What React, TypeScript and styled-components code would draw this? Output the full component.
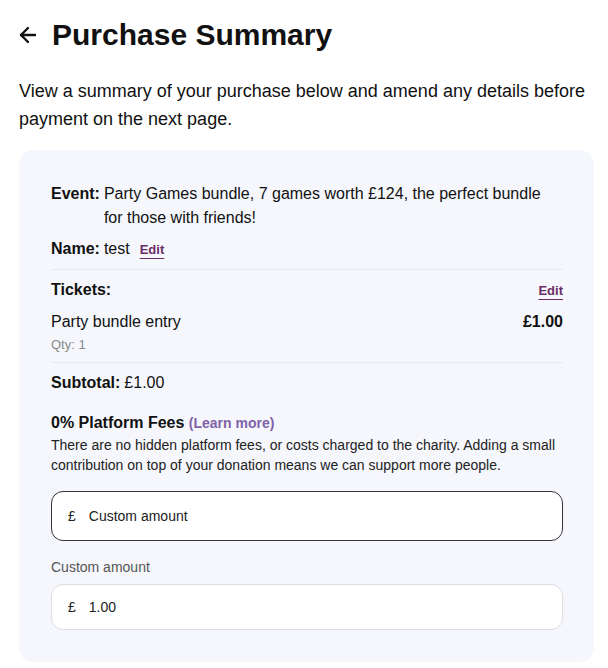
import styled, { createGlobalStyle } from "styled-components";
import { ArrowLeft } from "lucide-react";

const GlobalStyle = createGlobalStyle`
    body {
        margin: 0;
        background: #fff;
        font-family: "Liberation Sans", Arial, sans-serif;
        color: #111;
    }
`

export default function App() {
    return (
        <PageWrap>
            <GlobalStyle />
            <HeaderWrap>
                <BackButton aria-label="Back">
                    <ArrowLeft size={24} strokeWidth={2.4} />
                </BackButton>
                <h1>Purchase Summary</h1>
            </HeaderWrap>

            <Intro>
                View a summary of your purchase below and amend any details before payment on the next page.
            </Intro>

            <Card>
                <DetailRow $gapBelow={7}>
                    <b>Event:</b>
                    <span>Party Games bundle, 7 games worth £124, the perfect bundle for those with friends!</span>
                </DetailRow>
                <DetailRow $gapBelow={6}>
                    <b>Name:</b>
                    <span>test</span>
                    <EditLink href="#">Edit</EditLink>
                </DetailRow>

                <Divider />

                <SplitRow $gapBelow={7}>
                    <b>Tickets:</b>
                    <EditLink href="#">Edit</EditLink>
                </SplitRow>
                <SplitRow $gapBelow={2}>
                    <span>Party bundle entry</span>
                    <b>£1.00</b>
                </SplitRow>
                <Qty>Qty: 1</Qty>

                <Divider />

                <DetailRow $gapBelow={0}>
                    <b>Subtotal:</b>
                    <span>£1.00</span>
                </DetailRow>

                <FeesSection>
                    <h3>
                        0% Platform Fees <a href="#">(Learn more)</a>
                    </h3>
                    <p>
                        There are no hidden platform fees, or costs charged to the charity. Adding a small contribution on top of your donation means we can support more people.
                    </p>
                </FeesSection>

                <AmountBox $active>
                    <span>£</span>
                    <span>Custom amount</span>
                </AmountBox>

                <FieldLabel>Custom amount</FieldLabel>
                <AmountBox>
                    <span>£</span>
                    <span>1.00</span>
                </AmountBox>
            </Card>
        </PageWrap>
    )
}

const PageWrap = styled.main`
    width: 575px;
    padding: 17px 0 7px 19px;
`

const HeaderWrap = styled.header`
    display: flex;
    align-items: center;
    gap: 12px;

    & h1 {
        margin: 0;
        font-size: 30px;
        line-height: 36px;
        font-weight: 700;
    }
`

const BackButton = styled.button`
    display: flex;
    padding: 0;
    margin-left: -3px;
    border: none;
    background: none;
    color: #111;
`

const Intro = styled.p`
    margin: 24px 0 17px;
    font-size: 18px;
    line-height: 28px;
    width: 580px;
`

const Card = styled.section`
    display: flex;
    flex-direction: column;
    background: #f5f7fc;
    border-radius: 14px;
    padding: 32px 31px 32px 32px;
`

const DetailRow = styled.div<{ $gapBelow?: number }>`
    display: flex;
    align-items: baseline;
    gap: 4px;
    font-size: 16px;
    line-height: 24px;
    margin-bottom: ${p => p.$gapBelow ?? 8}px;

    & b {
        flex-shrink: 0;
    }

    & span {
        max-width: 440px;
    }
`

const SplitRow = styled.div<{ $gapBelow?: number }>`
    display: flex;
    justify-content: space-between;
    align-items: baseline;
    font-size: 16px;
    line-height: 24px;
    margin-bottom: ${p => p.$gapBelow ?? 8}px;
`

const EditLink = styled.a`
    margin-left: 6px;
    font-size: 13px;
    font-weight: 700;
    color: #6a2d68;
    text-decoration: underline;
    text-underline-offset: 4px;
`

const Qty = styled.div`
    margin-bottom: 7px;
    font-size: 13px;
    line-height: 18px;
    color: #8a8a8a;
`

const Divider = styled.hr`
    width: 100%;
    margin: 1px 0 8px;
    border: none;
    border-top: 1px solid #e6e9f0;
`

const FeesSection = styled.div`
    margin-top: 16px;

    & h3 {
        margin: 0;
        font-size: 16px;
        line-height: 24px;
        font-weight: 700;

        & a {
            font-size: 14px;
            color: #8062a8;
            text-decoration: none;
        }
    }

    & p {
        margin: 0;
        font-size: 14px;
        line-height: 20px;
        color: #222;
    }
`

const AmountBox = styled.div<{ $active?: boolean }>`
    display: flex;
    align-items: center;
    gap: 13px;
    height: ${p => (p.$active ? "50px" : "46px")};
    box-sizing: border-box;
    margin-top: ${p => (p.$active ? "16px" : "7px")};
    padding: 0 16px;
    background: #fff;
    border: 1px solid ${p => (p.$active ? "#34323c" : "#dcdde2")};
    border-radius: 12px;
    font-size: 14px;
    color: #222;
`

const FieldLabel = styled.div`
    margin-top: 16px;
    font-size: 14px;
    line-height: 20px;
    color: #555;
`
